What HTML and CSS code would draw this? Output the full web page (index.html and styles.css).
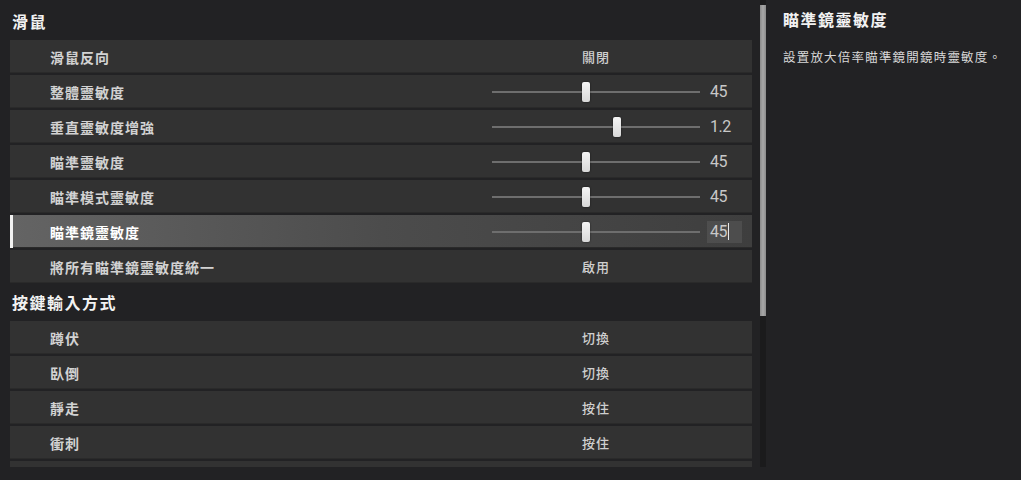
FILE: index.html
```html
<!DOCTYPE html>
<html lang="zh-Hant">
<head>
    <meta charset="UTF-8">
    <title>設定</title>
    <link rel="stylesheet" href="styles.css">
</head>
<body>
    <div class="page">
        <div class="list">
            <h3 class="section">滑鼠</h3>
            <div class="row">
                <span class="label">滑鼠反向</span>
                <span class="value">關閉</span>
            </div>
            <div class="row">
                <span class="label">整體靈敏度</span>
                <div class="slider"><span class="thumb" style="left: 45%"></span></div>
                <span class="num">45</span>
            </div>
            <div class="row">
                <span class="label">垂直靈敏度增強</span>
                <div class="slider"><span class="thumb" style="left: 60%"></span></div>
                <span class="num">1.2</span>
            </div>
            <div class="row">
                <span class="label">瞄準靈敏度</span>
                <div class="slider"><span class="thumb" style="left: 45%"></span></div>
                <span class="num">45</span>
            </div>
            <div class="row">
                <span class="label">瞄準模式靈敏度</span>
                <div class="slider"><span class="thumb" style="left: 45%"></span></div>
                <span class="num">45</span>
            </div>
            <div class="row active">
                <span class="label">瞄準鏡靈敏度</span>
                <div class="slider"><span class="thumb" style="left: 45%"></span></div>
                <span class="num edit">45<span class="caret"></span></span>
            </div>
            <div class="row">
                <span class="label">將所有瞄準鏡靈敏度統一</span>
                <span class="value">啟用</span>
            </div>

            <h3 class="section">按鍵輸入方式</h3>
            <div class="row">
                <span class="label">蹲伏</span>
                <span class="value">切換</span>
            </div>
            <div class="row">
                <span class="label">臥倒</span>
                <span class="value">切換</span>
            </div>
            <div class="row">
                <span class="label">靜走</span>
                <span class="value">按住</span>
            </div>
            <div class="row">
                <span class="label">衝刺</span>
                <span class="value">按住</span>
            </div>
            <!-- next row only peeks in at the bottom edge -->
            <div class="row"></div>
        </div>

        <div class="scroll">
            <div class="scroll-thumb"></div>
        </div>

        <div class="info">
            <h3 class="info-title">瞄準鏡靈敏度</h3>
            <p class="info-text">設置放大倍率瞄準鏡開鏡時靈敏度。</p>
        </div>
    </div>
</body>
</html>
```

FILE: styles.css
```css
html, body {
    margin: 0;
    padding: 0;
    background-color: #222224;
    font-family: "Noto Sans CJK TC", "Noto Sans", sans-serif;
    color: #d4d4d4;
}

.page {
    display: flex;
    width: 1021px;
    height: 480px;
    overflow: hidden;
}

/* Left settings list, clipped like a scroll view */
.list {
    margin-left: 10px;
    width: 742px;
    height: 467px;
    overflow: hidden;
    padding-top: 4px;
    box-sizing: border-box;
    display: flex;
    flex-direction: column;
    gap: 2px;
}

.section {
    margin: 0;
    height: 34px;
    flex-shrink: 0;
    display: flex;
    align-items: center;
    padding-left: 2px;
    font-size: 16px;
    font-weight: 700;
    letter-spacing: 1.5px;
    color: #f2f2f2;
}

.row {
    flex-shrink: 0;
    height: 33px;
    display: flex;
    align-items: center;
    background-color: #323232;
    box-shadow: inset 0 -1px 0 #2a2a2a;
    box-sizing: border-box;
}

.label {
    width: 482px;
    padding-left: 40px;
    box-sizing: border-box;
    font-size: 14px;
    font-weight: 700;
    letter-spacing: 1px;
    color: #d2d2d2;
}

.value {
    width: 208px;
    text-align: center;
    font-size: 13px;
    font-weight: 500;
    letter-spacing: 1px;
    color: #cfcfcf;
}

/* Slider */
.slider {
    position: relative;
    width: 208px;
    height: 2px;
    background-color: #6e6e6e;
    margin-right: 10px;
}

.thumb {
    position: absolute;
    top: -9px;
    width: 8px;
    height: 20px;
    margin-left: -4px;
    border-radius: 2px;
    background: linear-gradient(to bottom, #f4f4f4, #d8d8d8);
    box-shadow: 0 0 2px rgba(0, 0, 0, 0.6);
}

.num {
    font-family: Roboto, "Liberation Sans", sans-serif;
    font-size: 16px;
    color: #c8c8c8;
    letter-spacing: -0.5px;
}

/* Selected row */
.row.active {
    background: linear-gradient(to right, #646464, #4c4c4c 50%, #3e3e3e);
    border-left: 3px solid #f2f2f2;
}

.row.active .label {
    width: 479px;
    padding-left: 37px;
    color: #ffffff;
}

.num.edit {
    display: flex;
    align-items: center;
    width: 35px;
    height: 22px;
    margin-left: -3px;
    padding-left: 3px;
    box-sizing: border-box;
    background-color: rgba(90, 90, 90, 0.55);
}

.caret {
    display: inline-block;
    width: 1px;
    height: 17px;
    margin-left: 1px;
    background-color: #e8e8e8;
}

/* Scrollbar */
.scroll {
    margin-left: 8px;
    width: 6px;
    height: 467px;
    padding-top: 5px;
    box-sizing: border-box;
    background-color: #1b1b1c;
}

.scroll-thumb {
    height: 311px;
    background: linear-gradient(to right, #8a8a8a, #a8a8a8, #8a8a8a);
}

/* Right description panel */
.info {
    padding-left: 17px;
}

.info-title {
    margin: 7px 0 0 0;
    font-size: 16px;
    font-weight: 700;
    letter-spacing: 1.5px;
    color: #f2f2f2;
}

.info-text {
    margin: 16px 0 0 0;
    font-size: 12.5px;
    letter-spacing: 1.2px;
    color: #d8d8d8;
}
```
